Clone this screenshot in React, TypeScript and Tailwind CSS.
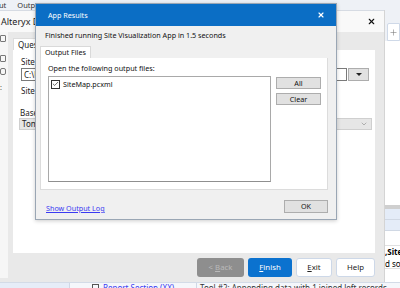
import { Check, ChevronDown, Plus, X } from "lucide-react"

function Wizard() {
  return (
    <div className="absolute left-0 top-[10px] w-[385px] h-[272px] flex flex-col bg-[#e9e9e9] border-r border-[#d4d4d4]">
      <div className="h-[22px] flex items-center justify-between bg-[#f9f9f9] border-t border-[#d6dbe3] pl-[1px] pr-[8px]">
        <span className="text-[9px] text-[#222]">Alteryx Designer</span>
        <X className="w-[9px] h-[9px] text-[#111]" strokeWidth={3} />
      </div>
      <div className="flex-1 flex">
        <div className="w-[8px] bg-[#f6f6f6] flex flex-col items-start pt-[3px] gap-[12px] mb-[4px]">
          <div className="w-[6px] h-[7px] border border-[#777] rounded-[1px]" />
          <div className="w-[6px] h-[7px] border border-[#777] rounded-[1px] mt-[1px]" />
          <div className="w-[6px] h-[7px] border border-[#777] rounded-[2px] -mt-[6px]" />
          <div className="text-[7px] leading-[7px] text-[#555] -mt-[3px]">:</div>
        </div>
        <div className="flex-1 flex flex-col pl-[5px] pr-[9px]">
          <div className="h-[6px]" />
          <div className="h-[12px] flex">
            <div className="bg-white border border-b-0 border-[#dcdcdc] px-[4px] text-[8px] leading-[11px] text-[#222]">Questions</div>
          </div>
          <div className="h-[203px] bg-white flex flex-col pl-[8px] pr-[6px] pt-[6px] text-[8px] text-[#222]">
            <div className="leading-[11px]">Site Name</div>
            <div className="flex h-[13px] mt-[1px]">
              <div className="flex-1 border border-[#7a7a7a] bg-white leading-[11px] pl-[2px]">C:\Users\</div>
              <div className="w-[21px] ml-[1px] border border-[#adadad] bg-[#e1e1e1] flex items-center justify-center">
                <div className="w-0 h-0 border-l-[3px] border-r-[3px] border-t-[3px] border-l-transparent border-r-transparent border-t-[#222]" />
              </div>
            </div>
            <div className="leading-[11px] mt-[4px]">Site Type</div>
            <div className="leading-[11px] mt-[11px] -ml-[1px]">Base Map</div>
            <div className="flex items-center justify-between h-[12px] -ml-[2px] -mr-[3px] border border-[#cfcfcf] bg-[#e6e6e6] pl-[2px] pr-[3px] leading-[10px]">
              <span>Tom Tom</span>
              <ChevronDown className="w-[8px] h-[8px] text-[#777]" strokeWidth={1.5} />
            </div>
          </div>
          <div className="flex-1 flex justify-end items-start gap-[4px] pt-[5px] text-[7.8px]">
            <div className="w-[47px] h-[19px] rounded-[3px] bg-[#8e8e8e] text-[#b9b9b9] flex items-center justify-center">&lt; <span className="underline ml-[2px]">B</span>ack</div>
            <div className="w-[44px] h-[19px] rounded-[3px] bg-[#0b72cf] text-white flex items-center justify-center"><span className="underline">F</span>inish</div>
            <div className="w-[36px] h-[19px] rounded-[3px] bg-white border border-[#cdd8e8] text-[#222] flex items-center justify-center"><span className="underline">E</span>xit</div>
            <div className="w-[39px] h-[19px] rounded-[3px] bg-white border border-[#cdd8e8] text-[#222] flex items-center justify-center">Help</div>
          </div>
        </div>
      </div>
    </div>
  )
}

function AppResults() {
  return (
    <div className="absolute left-[35px] top-[3px] w-[302px] h-[217px] flex flex-col bg-[#f0f0f0] border border-[#9aa6b4] shadow-[0_1px_4px_rgba(0,0,0,0.2)]">
      <div className="h-[22px] bg-[#0b6ec5] flex items-center justify-between pl-[12px] pr-[11px]">
        <span className="text-[7.2px] text-white">App Results</span>
        <X className="w-[8px] h-[8px] text-white" strokeWidth={3.5} />
      </div>
      <div className="flex-1 flex flex-col pl-[4px] pr-[8px] text-[7.2px] text-[#111]">
        <div className="leading-[10px] pt-[4px] pl-[5px]">Finished running Site Visualization App in 1.5 seconds</div>
        <div className="h-[12px] mt-[6px] flex">
          <div className="bg-white border border-b-0 border-[#d9d9d9] px-[4px] leading-[11px]">Output Files</div>
        </div>
        <div className="h-[132px] bg-white border border-t-0 border-[#dcdcdc] flex flex-col pl-[7px] pr-[6px]">
          <div className="leading-[10px] pt-[5px]">Open the following output files:</div>
          <div className="flex mt-[3px]">
            <div className="w-[223px] h-[106px] border border-[#a9a9a9] border-b-[#8f8f8f] bg-white pl-[2px] pt-[2px]">
              <div className="flex items-center gap-[3px]">
                <div className="w-[9px] h-[9px] border border-[#333] bg-white flex items-center justify-center">
                  <Check className="w-[8px] h-[8px] text-[#333]" strokeWidth={2.5} />
                </div>
                <span className="leading-[10px]">SiteMap.pcxml</span>
              </div>
            </div>
            <div className="flex flex-col ml-[5px] pt-[1px] gap-[4px]">
              <div className="w-[45px] h-[12px] bg-[#e1e1e1] border border-[#adadad] leading-[10px] text-center">All</div>
              <div className="w-[45px] h-[12px] bg-[#e1e1e1] border border-[#adadad] leading-[10px] text-center">Clear</div>
            </div>
          </div>
        </div>
        <div className="flex justify-between items-center pl-[6px] pt-[10px]">
          <span className="text-[#3a3af2] underline leading-[10px] mt-[3px]">Show Output Log</span>
          <div className="w-[44px] h-[13px] bg-[#e1e1e1] border border-[#adadad] leading-[11px] text-center">OK</div>
        </div>
      </div>
    </div>
  )
}

export default function App() {
  return (
    <div className="relative w-[400px] h-[288px] overflow-hidden bg-[#eef1f6] font-['Noto_Sans',sans-serif] flex flex-col">
      <div className="h-[10px] flex items-center gap-[11px] text-[7.5px] leading-[10px] text-[#333] whitespace-nowrap">
        <span className="-ml-[15px]">About</span>
        <span>Output</span>
      </div>
      <div className="flex-1 flex justify-end">
        <div className="w-[15px] flex flex-col pt-[13px]">
          <div className="h-[18px] ml-[2px] bg-white border border-[#cfd9e8] rounded-tl-[2px] flex items-center justify-center">
            <Plus className="w-[9px] h-[9px] text-[#777]" strokeWidth={1.5} />
          </div>
          <div className="flex-1 bg-white flex flex-col text-[8px] whitespace-nowrap">
            <div className="h-[164px]" />
            <div className="h-[4px] bg-[#cfcfcf]" />
            <div className="h-[11px] bg-[#e4ecf8] border-b border-[#d0d8e4]" />
            <div className="h-[11px] bg-[#e4ecf8] border-b border-[#d0d8e4]" />
            <div className="h-[15px] border-b border-[#e0e0e0]" />
            <div className="h-[12px] font-bold leading-[12px]">,Site</div>
            <div className="h-[11px] leading-[11px] border-b border-[#e0e0e0]">d so</div>
            <div className="flex-1" />
          </div>
        </div>
      </div>
      <div className="h-[6px] flex bg-[#f5f7fb] border-t border-[#d3dbe7] text-[8px] leading-[10px] whitespace-nowrap">
        <div className="w-[70px] bg-[#e6edf8] border-r border-[#cfd8e6]" />
        <div className="w-[127px] flex pl-[22px] gap-[4px] border-r border-[#cfd8e6]">
          <div className="w-[7px] h-[7px] mt-[1px] border border-[#555]" />
          <span className="text-[#3a3af2] underline">Report Section (XX)</span>
        </div>
        <span className="pl-[3px] text-[#333]">Tool #2: Appending data with 1 joined left records</span>
      </div>
      <Wizard />
      <AppResults />
    </div>
  )
}
